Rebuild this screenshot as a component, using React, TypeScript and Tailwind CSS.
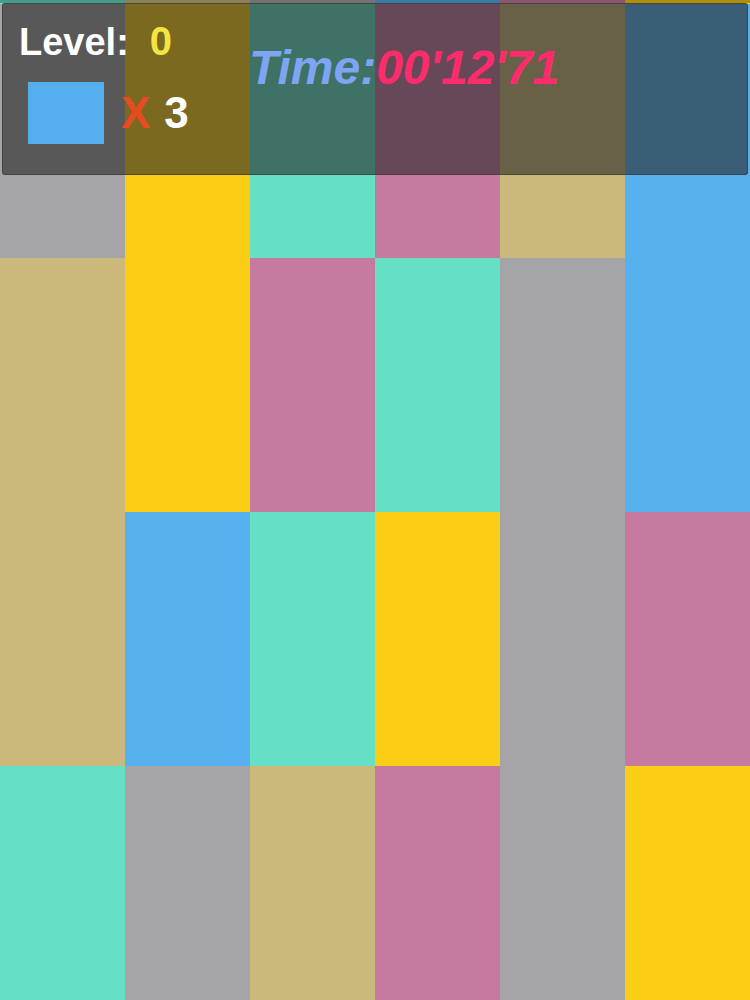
import React from "react";

type Tile = "gray" | "yellow" | "teal" | "pink" | "tan" | "blue";

const tileClass: Record<Tile, string> = {
  gray: "bg-[#a5a4a6]",
  yellow: "bg-[#f9ce15]",
  teal: "bg-[#66e0c4]",
  pink: "bg-[#c77aa0]",
  tan: "bg-[#cab97b]",
  blue: "bg-[#56b1ee]",
};

// the top row is only the last few pixels of a row that is scrolling out
const rows: { height: string; tiles: Tile[] }[] = [
  { height: "h-[4px]", tiles: ["teal", "tan", "gray", "blue", "pink", "yellow"] },
  { height: "h-[254px]", tiles: ["gray", "yellow", "teal", "pink", "tan", "blue"] },
  { height: "h-[254px]", tiles: ["tan", "yellow", "pink", "teal", "gray", "blue"] },
  { height: "h-[254px]", tiles: ["tan", "blue", "teal", "yellow", "gray", "pink"] },
  { height: "h-[254px]", tiles: ["teal", "gray", "tan", "pink", "gray", "yellow"] },
];

const HUD = () => (
  <div className="absolute inset-x-0 top-0">
    <div className="h-[3px] bg-black/30" />
    <div className="mx-[2px] flex h-[172px] rounded-[3px] border border-[rgba(60,60,60,0.7)] bg-[rgba(38,38,38,0.6)] font-['Liberation_Sans',Arial,sans-serif] font-bold">
      <div className="flex w-[230px] flex-col pl-[16px] pt-[15px]">
        <div className="flex items-baseline text-[38px] leading-[44px]">
          <span className="text-white">Level:</span>
          <span className="ml-[21px] text-[40px] text-[#f3e443]">0</span>
        </div>
        <div className="mt-[18px] flex items-center">
          <div className="ml-[9px] h-[62px] w-[76px] bg-[#55aeee]" />
          <span className="ml-[17px] text-[44px] leading-none text-[#e84a24]">X</span>
          <span className="ml-[14px] text-[44px] leading-none text-white">3</span>
        </div>
      </div>
      <div className="flex pl-[16px] pt-[36px] text-[48px] italic leading-[56px]">
        <span className="text-[#7ea5f2]">Time:</span>
        <span className="text-[#fe2c6c]">00'12'71</span>
      </div>
    </div>
  </div>
);

const App = () => {
  return (
    <div className="relative h-[1000px] w-[750px] overflow-hidden bg-[#a5a4a6]">
      <div className="flex flex-col">
        {rows.map((row, r) => (
          <div key={r} className={`grid shrink-0 grid-cols-6 ${row.height}`}>
            {row.tiles.map((t, c) => (
              <div key={c} className={tileClass[t]} />
            ))}
          </div>
        ))}
      </div>
      <HUD />
    </div>
  );
};

export default App;
